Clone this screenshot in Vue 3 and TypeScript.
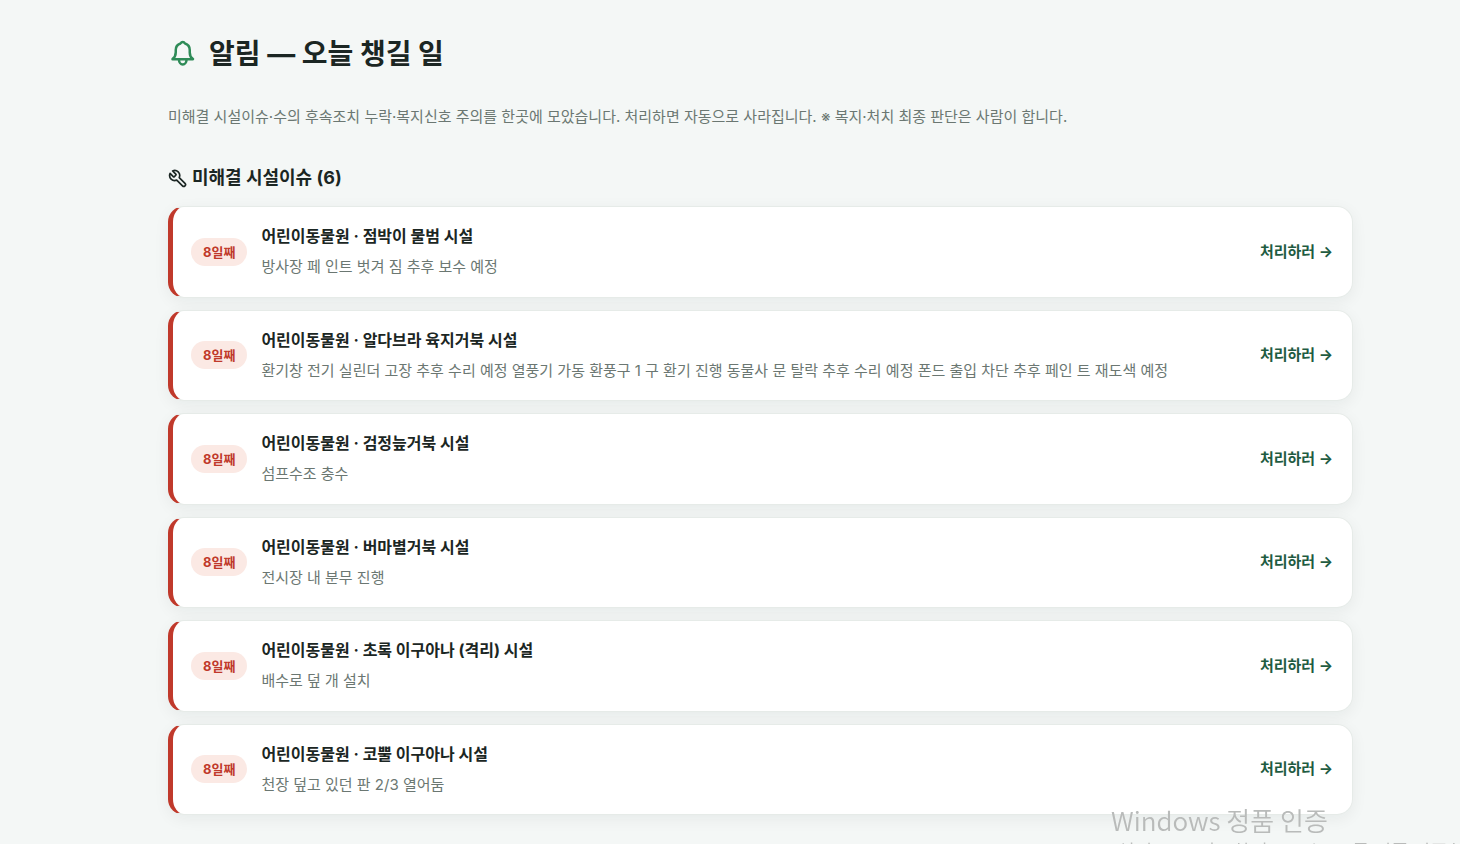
<script setup lang="ts">
interface Issue {
  id: number
  days: number
  title: string
  detail: string
}

const issues: Issue[] = [
  { id: 1, days: 8, title: '어린이동물원 · 점박이 물범 시설', detail: '방사장 페 인트 벗겨 짐 추후 보수 예정' },
  { id: 2, days: 8, title: '어린이동물원 · 알다브라 육지거북 시설', detail: '환기창 전기 실린더 고장 추후 수리 예정 열풍기 가동 환풍구 1 구 환기 진행 동물사 문 탈락 추후 수리 예정 폰드 출입 차단 추후 페인 트 재도색 예정' },
  { id: 3, days: 8, title: '어린이동물원 · 검정늪거북 시설', detail: '섬프수조 충수' },
  { id: 4, days: 8, title: '어린이동물원 · 버마별거북 시설', detail: '전시장 내 분무 진행' },
  { id: 5, days: 8, title: '어린이동물원 · 초록 이구아나 (격리) 시설', detail: '배수로 덮 개 설치' },
  { id: 6, days: 8, title: '어린이동물원 · 코뿔 이구아나 시설', detail: '천장 덮고 있던 판 2/3 열어둠' },
]
</script>

<template>
  <main class="page">
    <h1 class="page-title">
      <svg class="bell" viewBox="0 0 24 24" aria-hidden="true">
        <path d="M3.600 16.100c1.700-1.200 2.600-2.700 2.600-5.400V8.800c0-2.600 1.600-4.500 3.800-5.200q.7-1.300 1.800-1.300t1.800 1.300c2.200.7 3.800 2.600 3.800 5.200v1.900c0 2.700.9 4.200 2.600 5.400Z" />
        <path d="M8.800 16.500a3 3.800 0 0 0 6 0" />
      </svg>
      알림 — 오늘 챙길 일
    </h1>
    <p class="intro">미해결 시설이슈·수의 후속조치 누락·복지신호 주의를 한곳에 모았습니다. 처리하면 자동으로 사라집니다. ※ 복지·처치 최종 판단은 사람이 합니다.</p>

    <section aria-labelledby="facility-heading">
      <h2 id="facility-heading" class="section-title">
        <svg class="wrench" viewBox="0 0 24 24" aria-hidden="true">
          <path transform="translate(24 1) scale(-1 1)" d="M14.700 6.300a1 1 0 0 0 0 1.400l1.600 1.600a1 1 0 0 0 1.400 0l3.770-3.770a6 6 0 0 1-7.940 7.940l-6.910 6.910a2.120 2.120 0 0 1-3-3l6.910-6.910a6 6 0 0 1 7.940-7.940l-3.760 3.760z" />
        </svg>
        미해결 시설이슈 ({{ issues.length }})
      </h2>
      <ul class="issues">
        <li v-for="issue in issues" :key="issue.id" class="issue">
          <span class="days">{{ issue.days }}일째</span>
          <div class="body">
            <h3 class="name">{{ issue.title }}</h3>
            <p class="detail">{{ issue.detail }}</p>
          </div>
          <a class="action" href="#">처리하러 →</a>
        </li>
      </ul>
    </section>
  </main>

  <aside class="activation">
    <p class="activation-title">Windows 정품 인증</p>
    <p class="activation-text">[설정]으로 이동하여 Windows를 정품 인증합니다.</p>
  </aside>
</template>

<style>
html,
body {
  background: #f4f7f6;
  overflow: hidden;
}
</style>

<style scoped>
.page {
  padding: 33px 107px 30px 168px;
  color: #1b2623;
  font-family: Inter, "Noto Sans CJK KR", sans-serif;
}

h1,
h2,
h3,
p,
ul {
  margin: 0;
  padding: 0;
}

.page-title {
  display: flex;
  align-items: center;
  gap: 11px;
  font-size: 28px;
  line-height: 42px;
  font-weight: 700;
}

svg {
  flex: none;
  fill: none;
  stroke: currentColor;
  stroke-linecap: round;
  stroke-linejoin: round;
}

.bell {
  width: 30px;
  height: 30px;
  color: #2e8b57;
  stroke-width: 2;
}

.intro {
  margin-top: 30px;
  color: #6b7772;
  font-size: 15px;
  line-height: 24px;
}

.section-title {
  display: flex;
  align-items: center;
  gap: 4px;
  margin-top: 35px;
  font-size: 18px;
  line-height: 28px;
  font-weight: 700;
}

.wrench {
  width: 20px;
  height: 20px;
  stroke-width: 2;
}

.issues {
  display: flex;
  flex-direction: column;
  gap: 12px;
  margin-top: 14px;
  list-style: none;
}

.issue {
  display: flex;
  align-items: center;
  gap: 14px;
  padding: 17px 19px 17px 18px;
  border: 1px solid #e6ebe8;
  border-left: 5px solid #c0392b;
  border-radius: 16px;
  background: #fff;
  box-shadow: 0 4px 16px rgba(20, 40, 32, 0.06);
}

.days {
  flex: none;
  padding: 0 12px;
  border-radius: 14px;
  background: #fbe9e4;
  color: #c0392b;
  font-size: 13px;
  line-height: 28px;
  font-weight: 700;
}

.body {
  display: flex;
  flex: 1;
  flex-direction: column;
  gap: 6px;
  min-width: 0;
}

.name {
  font-size: 16px;
  line-height: 1.5;
  font-weight: 700;
}

.detail {
  color: #6b7772;
  font-size: 15px;
  line-height: 1.7;
}

.action {
  flex: none;
  color: #1f5c42;
  font-size: 15px;
  line-height: 24px;
  font-weight: 700;
  text-decoration: none;
}

.activation {
  position: fixed;
  top: 802px;
  left: 1111px;
  color: #b9bbba;
  font-family: "Noto Sans CJK KR", sans-serif;
  font-weight: 350;
  white-space: nowrap;
  pointer-events: none;
}

.activation-title {
  font-size: 26px;
  line-height: 36px;
}

.activation-text {
  font-size: 19px;
  line-height: 26px;
}
</style>
